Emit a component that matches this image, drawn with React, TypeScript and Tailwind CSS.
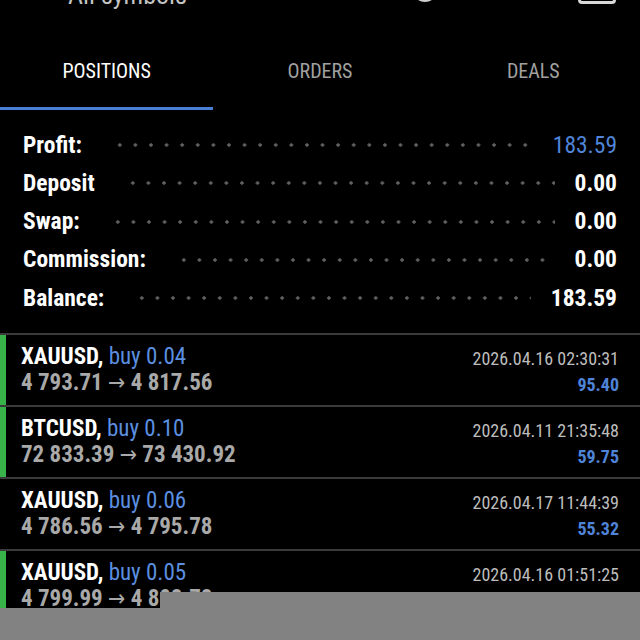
const SUMMARY = [
  { label: "Profit:", value: "183.59", blue: true },
  { label: "Deposit", value: "0.00" },
  { label: "Swap:", value: "0.00" },
  { label: "Commission:", value: "0.00" },
  { label: "Balance:", value: "183.59" },
];

const POSITIONS = [
  { symbol: "XAUUSD", side: "buy 0.04", open: "4 793.71", current: "4 817.56", time: "2026.04.16 02:30:31", profit: "95.40", bar: true },
  { symbol: "BTCUSD", side: "buy 0.10", open: "72 833.39", current: "73 430.92", time: "2026.04.11 21:35:48", profit: "59.75", bar: true },
  { symbol: "XAUUSD", side: "buy 0.06", open: "4 786.56", current: "4 795.78", time: "2026.04.17 11:44:39", profit: "55.32", bar: false },
  { symbol: "XAUUSD", side: "buy 0.05", open: "4 799.99", current: "4 808.78", time: "2026.04.16 01:51:25", profit: "45.10", bar: true },
];

const FONT = "font-['Roboto_Condensed','DejaVu_Sans_Condensed',Roboto,sans-serif]";

export default function App() {
  return (
    <div className={`relative h-[640px] w-[640px] overflow-hidden bg-black text-white ${FONT}`}>
      {/* header, mostly scrolled off the top */}
      <div className="relative h-[32px]">
        <div className="absolute left-[68px] top-[-22px] text-[26px] leading-[34px] text-[#c4c4c4]">All symbols</div>
        <svg className="absolute left-[412px] top-[-24px]" width="26" height="28" viewBox="0 0 26 28">
          <circle cx="13" cy="13" r="11" fill="none" stroke="#d0d0d0" strokeWidth="4" />
        </svg>
        <div className="absolute left-[578px] top-[-30px] h-[34px] w-[38px] rounded-[4px] border-[3px] border-[#d8d8d8]" />
      </div>

      {/* tabs */}
      <div className="grid h-[78px] grid-cols-3 text-[20px]">
        <div className="relative flex items-center justify-center text-white">
          POSITIONS
          <div className="absolute bottom-0 left-0 h-[3px] w-full bg-[#4a7fd6]" />
        </div>
        <div className="flex items-center justify-center text-[#a0a0a0]">ORDERS</div>
        <div className="flex items-center justify-center text-[#a0a0a0]">DEALS</div>
      </div>

      {/* summary */}
      <div className="px-[23px] pb-[16px] pt-[16px]">
        {SUMMARY.map((row) => (
          <div key={row.label} className="flex h-[38.3px] items-center">
            <span className="text-[23.5px] font-bold">{row.label}</span>
            <div className="ml-[30px] mr-[20px] h-[4px] flex-1 bg-[radial-gradient(circle,#626262_1.4px,transparent_2px)] bg-[length:15.6px_4px]" />
            <span className={`text-[23.5px] ${row.blue ? "text-[#4f84d8]" : "font-bold"}`}>{row.value}</span>
          </div>
        ))}
      </div>

      {/* open positions */}
      <div>
        {POSITIONS.map((p, i) => (
          <div key={i} className="flex h-[72px] border-t-2 border-[#3a3a3a]">
            <div className={`w-[6px] shrink-0 ${p.bar ? "bg-[#37b34a]" : ""}`} />
            <div className="flex flex-1 items-start justify-between pl-[15px] pr-[21px] pt-[8px]">
              <div className="flex flex-col">
                <div className="text-[23px] leading-[28px]">
                  <span className="font-bold">{p.symbol},</span>{" "}
                  <span className="text-[#5b8fe0]">{p.side}</span>
                </div>
                <div className="text-[23px] font-bold leading-[24px] text-[#a9a9a9]">
                  {p.open} <span className="font-normal">→</span> {p.current}
                </div>
              </div>
              <div className="flex flex-col items-end pt-[3px]">
                <div className="text-[18px] leading-[26px] text-[#bdbdbd]">{p.time}</div>
                <div className="text-[18px] font-bold leading-[26px] text-[#4f84d8]">{p.profit}</div>
              </div>
            </div>
          </div>
        ))}
      </div>

      {/* grey cover over the bottom */}
      <div className="absolute left-[160px] right-0 top-[592px] bottom-0 bg-[#828282]" />
      <div className="absolute left-0 w-[160px] top-[608px] bottom-0 bg-[#828282]" />
    </div>
  );
}
